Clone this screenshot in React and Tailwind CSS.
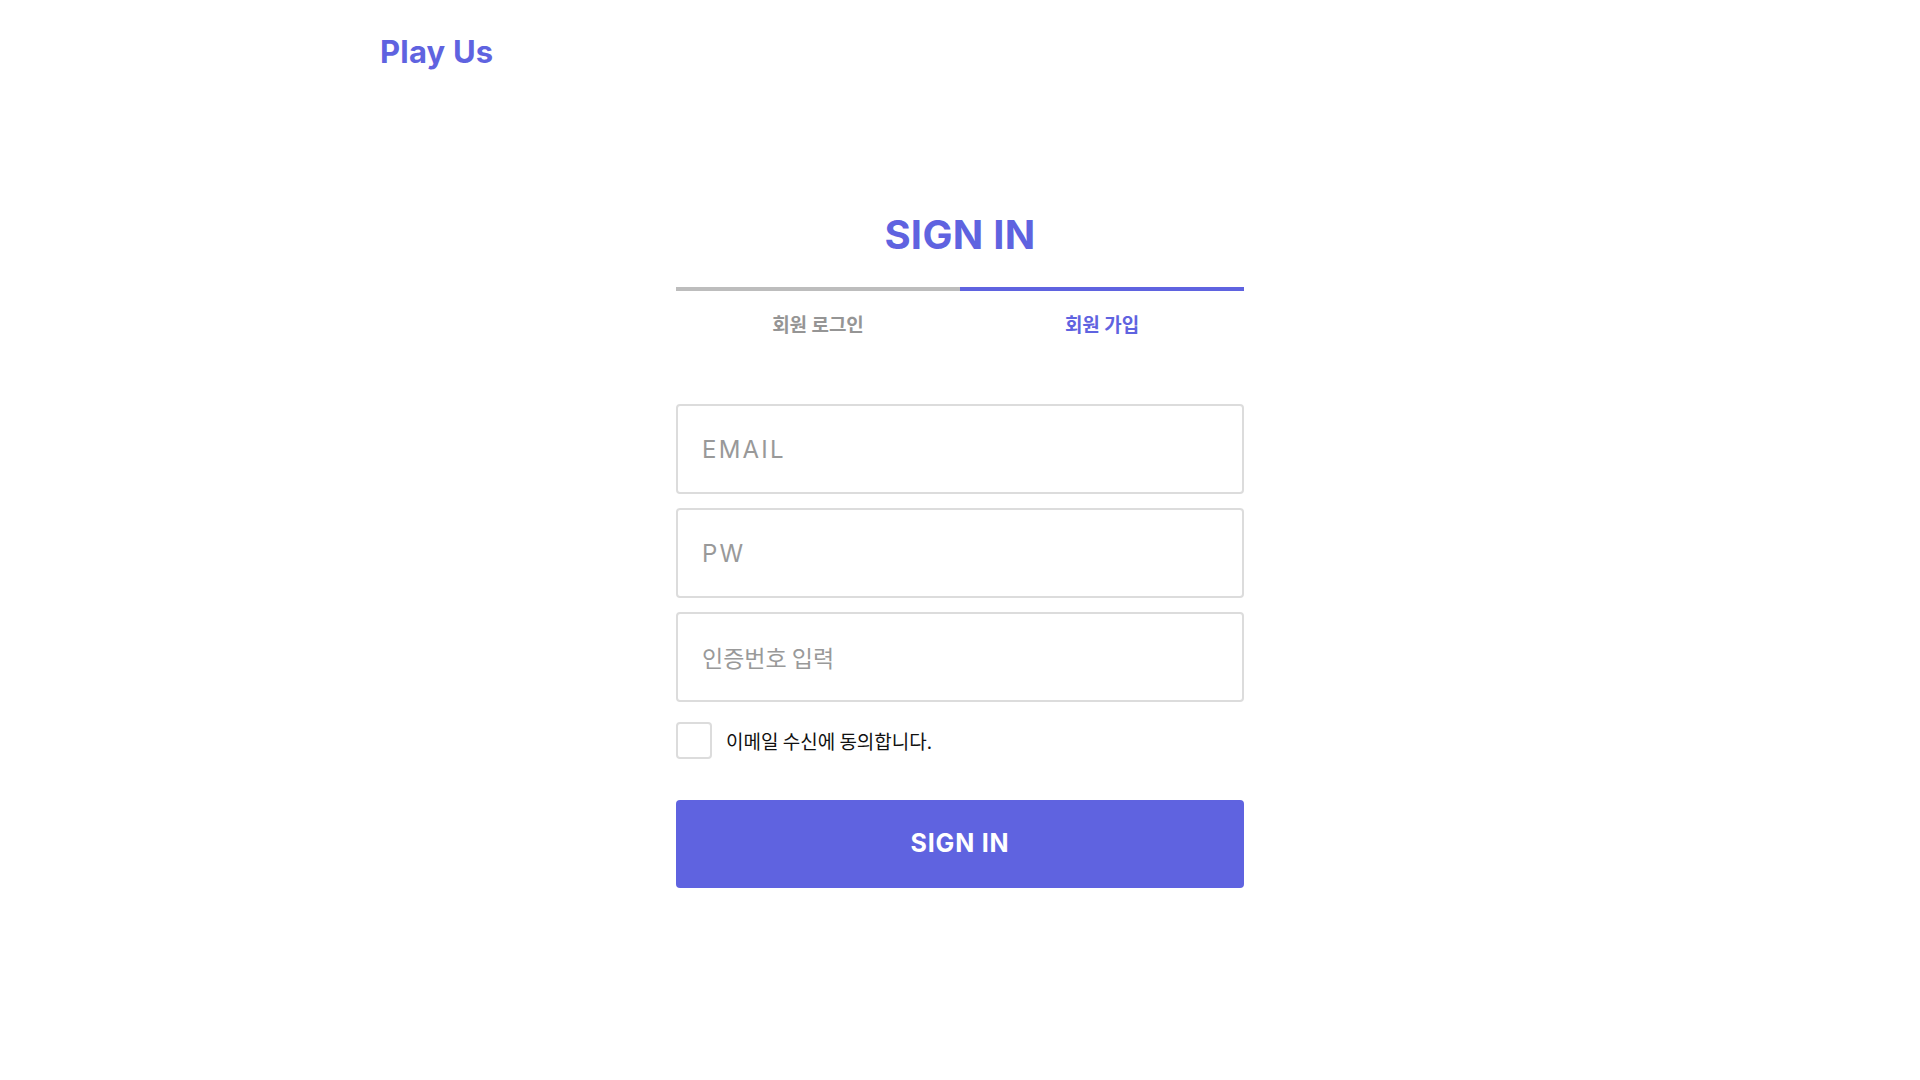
import { useState } from 'react';

const App = function() {
    const [agree, setAgree] = useState(false);

    return (
        <div className="min-h-screen bg-white font-['Inter','Noto_Sans_CJK_KR',sans-serif]">
            <header className="mx-auto w-[1160px] pt-[35px]">
                <h1 className="text-[31px] leading-[34px] font-bold text-[#5f63e0] tracking-[0.2px]">Play Us</h1>
            </header>

            <main className="mx-auto w-[568px] mt-[142px]">
                <h2 className="text-center text-[40px] leading-[48px] font-bold text-[#5f63e0] tracking-[0.3px]">SIGN IN</h2>

                <div className="mt-[28px] grid grid-cols-2">
                    <button className="flex flex-col items-center">
                        <span className="w-full h-[4px] bg-[#bdbdbd]" />
                        <span className="mt-[21px] text-[19px] leading-[24px] font-bold text-[#959595] font-['Noto_Sans_CJK_KR',sans-serif]">회원 로그인</span>
                    </button>
                    <button className="flex flex-col items-center">
                        <span className="w-full h-[4px] bg-[#5f63e0]" />
                        <span className="mt-[21px] text-[19px] leading-[24px] font-bold text-[#5f63e0] font-['Noto_Sans_CJK_KR',sans-serif]">회원 가입</span>
                    </button>
                </div>

                <form className="mt-[68px] flex flex-col gap-[14px]" onSubmit={(e) => e.preventDefault()}>
                    <input
                        type="email"
                        placeholder="EMAIL"
                        className="h-[90px] w-full rounded-[4px] border-2 border-[#dcdcdc] px-[24px] text-[24px] tracking-[2.2px] text-[#333] placeholder:text-[#999] outline-none"
                    />
                    <input
                        type="password"
                        placeholder="PW"
                        className="h-[90px] w-full rounded-[4px] border-2 border-[#dcdcdc] px-[24px] text-[24px] tracking-[2.2px] text-[#333] placeholder:text-[#999] outline-none"
                    />
                    <input
                        type="text"
                        placeholder="인증번호 입력"
                        className="h-[90px] w-full rounded-[4px] border-2 border-[#dcdcdc] px-[24px] text-[23px] text-[#333] placeholder:text-[#999] outline-none font-['Noto_Sans_CJK_KR',sans-serif]"
                    />

                    <label className="mt-[6px] flex items-center gap-[14px] cursor-pointer">
                        <span
                            onClick={() => setAgree(!agree)}
                            className="w-[36px] h-[37px] rounded-[4px] border-2 border-[#dcdcdc] flex items-center justify-center"
                        >
                            {agree && <span className="w-[16px] h-[16px] bg-[#5f63e0] rounded-[2px]" />}
                        </span>
                        <span className="text-[19px] leading-[24px] text-[#111] font-['Noto_Sans_CJK_KR',sans-serif]">이메일 수신에 동의합니다.</span>
                    </label>

                    <button
                        type="submit"
                        className="mt-[27px] h-[88px] w-full rounded-[4px] bg-[#5f63e0] text-white text-[25px] tracking-[0.8px] font-bold"
                    >
                        SIGN IN
                    </button>
                </form>
            </main>
        </div>
    );
};

export default App;
